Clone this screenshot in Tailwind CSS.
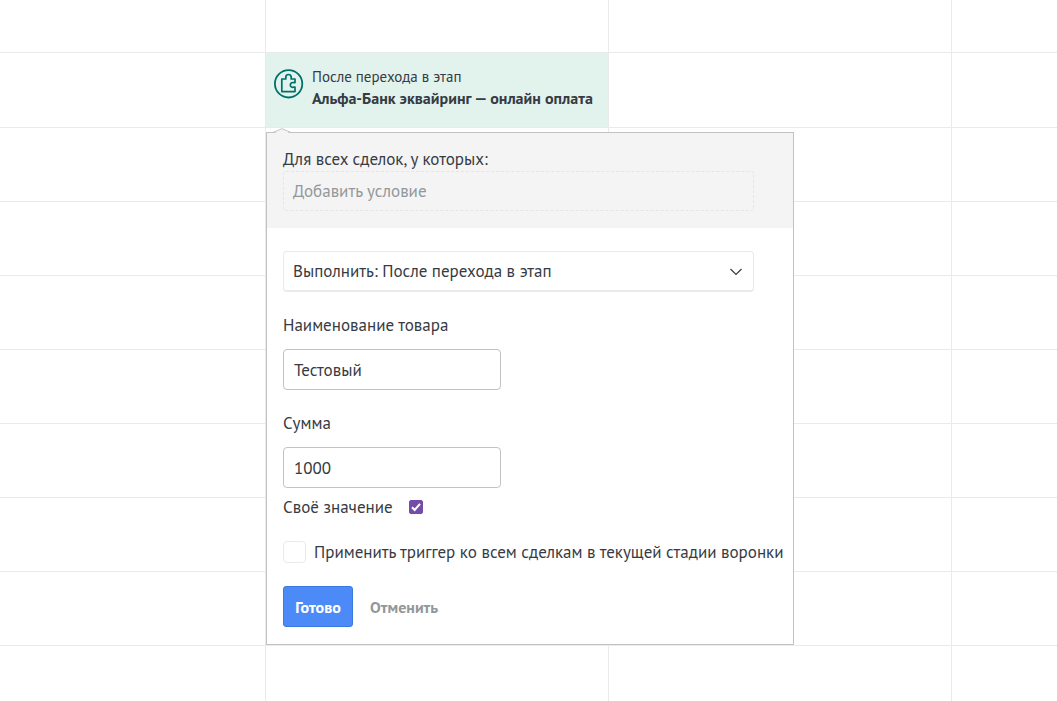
<!DOCTYPE html>
<html lang="ru">

<head>
    <meta charset="UTF-8">
    <meta name="viewport" content="width=device-width, initial-scale=1.0">
    <title>Воронка</title>
    <script src="https://cdn.jsdelivr.net/npm/@tailwindcss/browser@4"></script>
</head>

<body class="bg-white text-[#363b44] font-['PT_Sans','Noto_Sans',sans-serif] text-base">

    <!-- Pipeline grid -->
    <main class="grid grid-cols-[266px_343px_343px_1fr] grid-rows-[53px_75px] auto-rows-[74px] h-screen overflow-hidden *:border-r *:border-b *:border-[#e8eaeb] *:nth-[4n]:border-r-0">
        <div></div><div></div><div></div><div></div>

        <div></div>
        <div class="relative bg-[#e2f3ed]">
            <div class="flex items-start gap-2 pl-2 pt-3">
                <svg class="mt-1 size-[30px] shrink-0" viewBox="0 0 30 30" fill="none" stroke="#00706a" stroke-width="1.8" stroke-linejoin="round">
                    <circle cx="14.6" cy="14.8" r="13.7" />
                    <path stroke-width="1.7" d="M7.800 10h4V8.200a2.700 2.700 0 0 1 5.400 0V10h3.800v3.600h-1.600a2.400 2.400 0 1 0 0 4.600H21v4.400H7.800z" />
                </svg>
                <div class="whitespace-nowrap">
                    <p class="text-[15px] leading-[23px]">После перехода в этап</p>
                    <p class="text-[16px] leading-[21px] font-bold">Альфа-Банк эквайринг — онлайн оплата</p>
                </div>
            </div>

            <!-- Trigger settings -->
            <form class="absolute z-10 left-0 top-full mt-[5px] w-[528px] bg-white border border-[#c0c2c4] text-[17px] leading-6">
                <svg class="absolute -top-[5px] left-1.5 w-[18px] h-[6px]" viewBox="0 0 18 6" fill="#f4f4f4" stroke="#c0c2c4">
                    <path stroke="none" d="M0 6 9 1l9 5z" />
                    <path fill="none" d="M0 4.5 9 .7l9 3.8" />
                </svg>

                <div class="bg-[#f4f4f4] pl-4 pr-[39px] pt-[14px] pb-[17px]">
                    <p>Для всех сделок, у которых:</p>
                    <button type="button" class="block w-full h-10 px-[9px] text-left text-[#92989b] border border-dashed border-[#e5e5e5] rounded-[3px]">Добавить условие</button>
                </div>

                <div class="pl-4 pt-[23px] pb-[17px]">
                    <div class="relative mr-[39px]">
                        <select aria-label="Выполнить" class="block appearance-none w-full h-[41px] px-[9px] bg-white border border-b-2 border-[#e8eaeb] rounded">
                            <option>Выполнить: После перехода в этап</option>
                        </select>
                        <svg class="absolute right-3 top-[17px] w-3 h-2 pointer-events-none" viewBox="0 0 12 8" fill="none" stroke="#363b44" stroke-width="1.2">
                            <path d="M.5 1 6 6.500 11.500 1" />
                        </svg>
                    </div>

                    <label for="product" class="block mt-[21px] mb-3">Наименование товара</label>
                    <input id="product" type="text" value="Тестовый" class="block w-[218px] h-[41px] px-[10px] bg-white border border-[#c0c2c4] rounded">

                    <label for="amount" class="block mt-[21px] mb-3">Сумма</label>
                    <input id="amount" type="text" value="1000" class="block w-[218px] h-[41px] px-[10px] bg-white border border-[#c0c2c4] rounded">

                    <div class="flex items-center gap-4 mt-[7px]">
                        <label for="custom">Своё значение</label>
                        <span class="relative">
                            <input id="custom" type="checkbox" checked class="block appearance-none size-[14px] bg-white border border-[#767676] rounded-[2px] checked:bg-[#744da9] checked:border-[#744da9]">
                            <svg class="absolute inset-0 size-[14px] pointer-events-none" viewBox="0 0 14 14" fill="none" stroke="#fff" stroke-width="2">
                                <path d="m3 7.300 2.700 2.700 5.300-6.200" />
                            </svg>
                        </span>
                    </div>

                    <div class="flex items-center gap-2 mt-[21px] whitespace-nowrap">
                        <input id="apply" type="checkbox" class="appearance-none w-[23px] h-[22px] shrink-0 bg-white border border-[#e8eaeb] rounded checked:bg-[#4c8bf7]">
                        <label for="apply">Применить триггер ко всем сделкам в текущей стадии воронки</label>
                    </div>

                    <div class="flex items-center gap-[17px] mt-[22px] text-[16px] font-bold">
                        <button type="submit" class="h-[41px] w-[70px] bg-[#4c8bf7] border border-[#3a79df] rounded-[3px] text-white">Готово</button>
                        <button type="button" class="text-[#92989b]">Отменить</button>
                    </div>
                </div>
            </form>
        </div>
        <div></div><div></div>

        <div></div><div></div><div></div><div></div>
        <div></div><div></div><div></div><div></div>
        <div></div><div></div><div></div><div></div>
        <div></div><div></div><div></div><div></div>
        <div></div><div></div><div></div><div></div>
        <div></div><div></div><div></div><div></div>
        <div></div><div></div><div></div><div></div>
        <div></div><div></div><div></div><div></div>
    </main>

</body>

</html>
